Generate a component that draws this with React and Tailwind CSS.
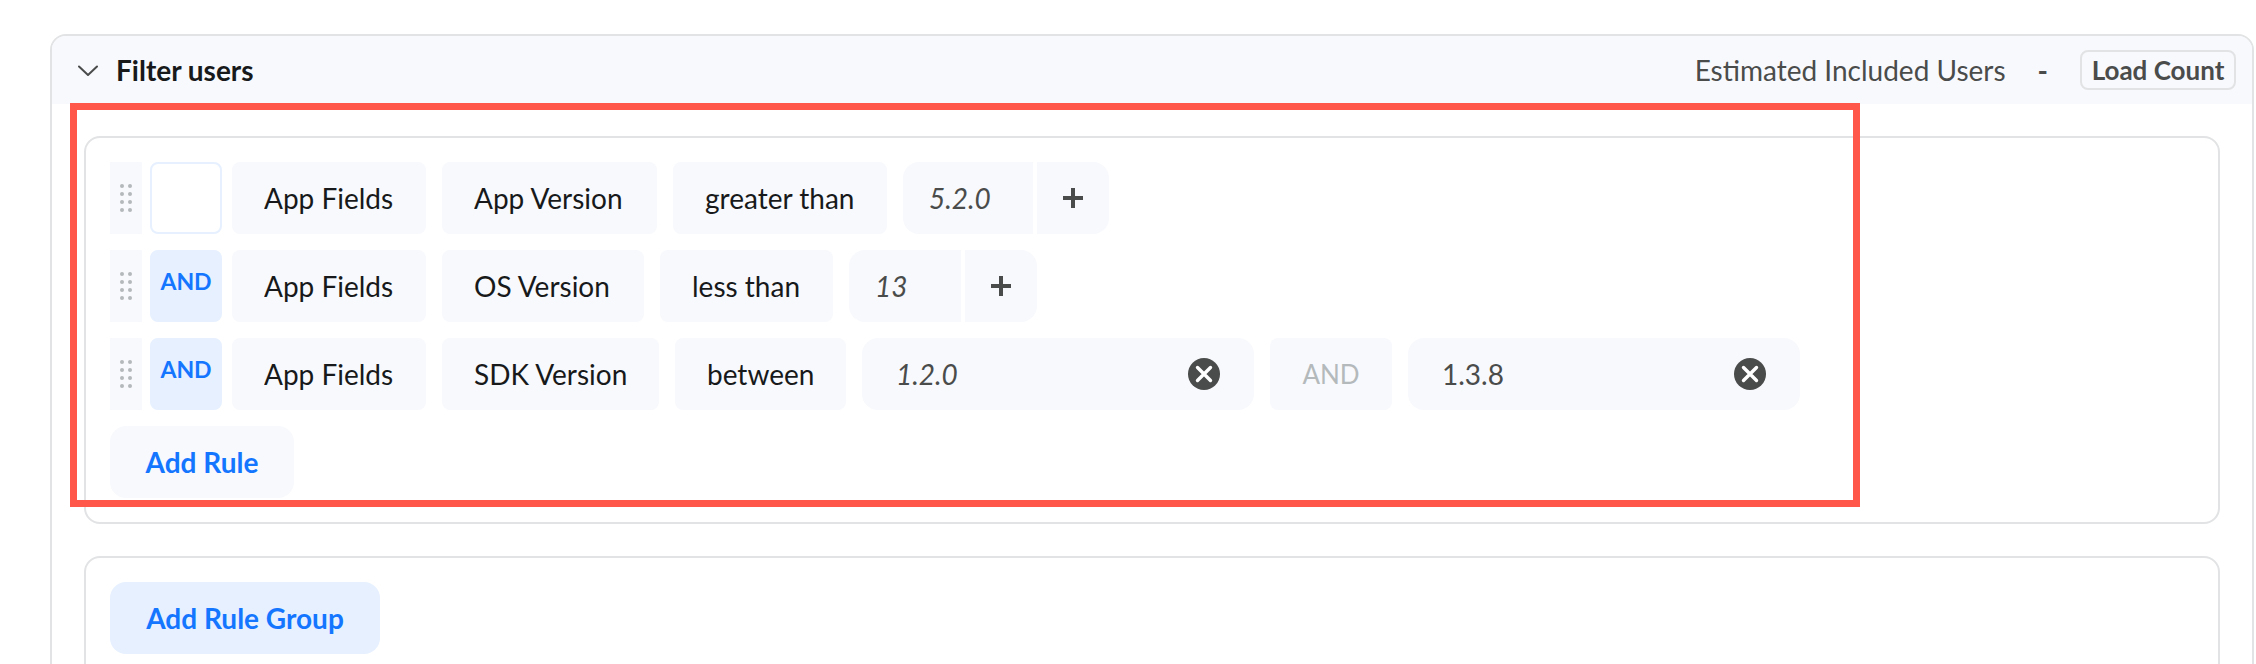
import React, { useState } from 'react';
import clsx from 'clsx';

const initialRules = [
  {
    id: 1,
    combinator: '',
    group: 'App Fields',
    field: { label: 'App Version', width: 'w-[215px]' },
    operator: { label: 'greater than', width: 'w-[214px]' },
    inputWidth: 'w-[130px]',
    values: ['5.2.0'],
  },
  {
    id: 2,
    combinator: 'AND',
    group: 'App Fields',
    field: { label: 'OS Version', width: 'w-[202px]' },
    operator: { label: 'less than', width: 'w-[173px]' },
    inputWidth: 'w-[112px]',
    values: ['13'],
  },
  {
    id: 3,
    combinator: 'AND',
    group: 'App Fields',
    field: { label: 'SDK Version', width: 'w-[217px]' },
    operator: { label: 'between', width: 'w-[171px]' },
    values: ['1.2.0', '1.3.8'],
  },
];

const ChevronIcon = () => (
  <svg width="20" height="12" viewBox="0 0 20 12" fill="none" aria-hidden="true">
    <path d="M1 2.5L10 11L19 2.5" stroke="#4a4c4b" strokeWidth="2" strokeLinecap="round" strokeLinejoin="round" />
  </svg>
);

const PlusIcon = () => (
  <svg width="20" height="20" viewBox="0 0 20 20" aria-hidden="true">
    <path d="M8 0h4v8h8v4h-8v8H8v-8H0V8h8z" fill="#4a4c4b" />
  </svg>
);

const ClearIcon = () => (
  <svg width="32" height="32" viewBox="0 0 32 32" aria-hidden="true">
    <circle cx="16" cy="16" r="16" fill="#4a4c4b" />
    <path d="M9.5 9.5L22.5 22.5M22.5 9.5L9.5 22.5" stroke="#fff" strokeWidth="3.4" strokeLinecap="round" />
  </svg>
);

const DragHandle = () => (
  <button type="button" aria-label="Drag rule" className="flex h-[72px] w-8 items-center justify-center bg-[#f8f9fd] cursor-grab">
    <svg width="12" height="28" viewBox="0 0 12 28" fill="#b4b9bb" aria-hidden="true">
      {[2, 10, 18, 26].map((y) => (
        <React.Fragment key={y}>
          <circle cx="2" cy={y} r="2" />
          <circle cx="10" cy={y} r="2" />
        </React.Fragment>
      ))}
    </svg>
  </button>
);

// Flat select without the native arrow
const ChipSelect = ({ label, value, width }) => (
  <select
    aria-label={label}
    defaultValue={value}
    className={clsx('h-[72px] appearance-none rounded-lg bg-[#f8f9fd] pl-8 text-[28px] text-[#17191a]', width)}
  >
    <option value={value}>{value}</option>
  </select>
);

// Single value with a button to add another one
const ValueInput = ({ value, width, onChange }) => (
  <div className="flex gap-1">
    <input
      type="text"
      aria-label="Value"
      value={value}
      onChange={(e) => onChange(e.target.value)}
      className={clsx('h-[72px] rounded-l-2xl bg-[#f8f9fd] pl-[26px] text-[28px] italic text-[#4a4c4b] outline-none', width)}
    />
    <button type="button" aria-label="Add value" className="flex h-[72px] w-[72px] items-center justify-center rounded-r-2xl bg-[#f8f9fd]">
      <PlusIcon />
    </button>
  </div>
);

// One end of a range, can be cleared
const RangeInput = ({ label, value, italic, onChange }) => (
  <div className="flex h-[72px] w-[392px] items-center rounded-2xl bg-[#f8f9fd] pl-[34px] pr-[34px]">
    <input
      type="text"
      aria-label={label}
      value={value}
      onChange={(e) => onChange(e.target.value)}
      className={clsx('min-w-0 flex-1 bg-transparent text-[28px] text-[#4a4c4b] outline-none', italic && 'italic')}
    />
    <button type="button" aria-label="Clear value" onClick={() => onChange('')}>
      <ClearIcon />
    </button>
  </div>
);

const RuleRow = ({ rule, onValueChange }) => (
  <div className="flex items-center">
    <DragHandle />
    <button
      type="button"
      aria-label={rule.combinator || 'First rule'}
      className={clsx(
        'ml-2 mr-2.5 h-[72px] w-[72px] rounded-lg border-2 border-[#e6f0ff] pb-2.5 text-[23px] font-bold text-[#1476ff]',
        rule.combinator ? 'bg-[#e6f0ff]' : 'bg-white'
      )}
    >
      {rule.combinator}
    </button>
    <div className="flex gap-4">
      <ChipSelect label="Field group" value={rule.group} width="w-[194px]" />
      <ChipSelect label="Field" value={rule.field.label} width={rule.field.width} />
      <ChipSelect label="Operator" value={rule.operator.label} width={rule.operator.width} />
      {rule.values.length === 1 ? (
        <ValueInput value={rule.values[0]} width={rule.inputWidth} onChange={(v) => onValueChange(rule.id, 0, v)} />
      ) : (
        <>
          <RangeInput label="From" value={rule.values[0]} italic onChange={(v) => onValueChange(rule.id, 0, v)} />
          <span className="flex h-[72px] w-[122px] items-center justify-center rounded-lg bg-[#f8f9fd] text-[26px] text-[#b4b9bb]">
            AND
          </span>
          <RangeInput label="To" value={rule.values[1]} onChange={(v) => onValueChange(rule.id, 1, v)} />
        </>
      )}
    </div>
  </div>
);

export default function App() {
  const [rules, setRules] = useState(initialRules);
  const [open, setOpen] = useState(true);

  const handleValueChange = (id, index, value) => {
    setRules((prev) =>
      prev.map((rule) =>
        rule.id === id ? { ...rule, values: rule.values.map((v, i) => (i === index ? value : v)) } : rule
      )
    );
  };

  return (
    <div className="h-screen overflow-hidden bg-white pl-[50px] pr-0.5 pt-[34px] font-['Lato','Liberation_Sans',sans-serif]">
      <section className="min-h-screen rounded-t-2xl border-2 border-[#e2e3e4]">
        <header className="flex h-[68px] items-center justify-between rounded-t-[14px] bg-[#f8f9fd] pl-[26px] pr-4">
          <button type="button" onClick={() => setOpen(!open)} className="flex items-center gap-[18px]">
            <ChevronIcon />
            <h2 className="text-[28px] font-bold text-[#17191a]">Filter users</h2>
          </button>
          <div className="flex items-center gap-8 text-[28px] text-[#4a4c4b]">
            <span>Estimated Included Users</span>
            <span className="font-bold">-</span>
            <button type="button" className="h-10 w-[156px] whitespace-nowrap rounded-lg border-2 border-[#e2e3e4] text-[26px] font-bold leading-8">
              Load Count
            </button>
          </div>
        </header>

        {open && (
          <div className="flex flex-col gap-8 p-8">
            <div className="relative flex flex-col items-start gap-4 rounded-2xl border-2 border-[#e2e3e4] p-6">
              {rules.map((rule) => (
                <RuleRow key={rule.id} rule={rule} onValueChange={handleValueChange} />
              ))}
              <button type="button" className="h-[72px] w-[184px] rounded-2xl bg-[#f8f9fd] text-[28px] font-bold text-[#1476ff]">
                Add Rule
              </button>
              {/* highlight around the rules */}
              <div className="pointer-events-none absolute -left-4 -top-[35px] bottom-[15px] w-[1790px] border-[7px] border-[#ff584a]" />
            </div>

            <div className="rounded-2xl border-2 border-[#e2e3e4] p-6">
              <button type="button" className="h-[72px] w-[270px] rounded-2xl bg-[#e6f0ff] text-[28px] font-bold text-[#1476ff]">
                Add Rule Group
              </button>
            </div>
          </div>
        )}
      </section>
    </div>
  );
}
